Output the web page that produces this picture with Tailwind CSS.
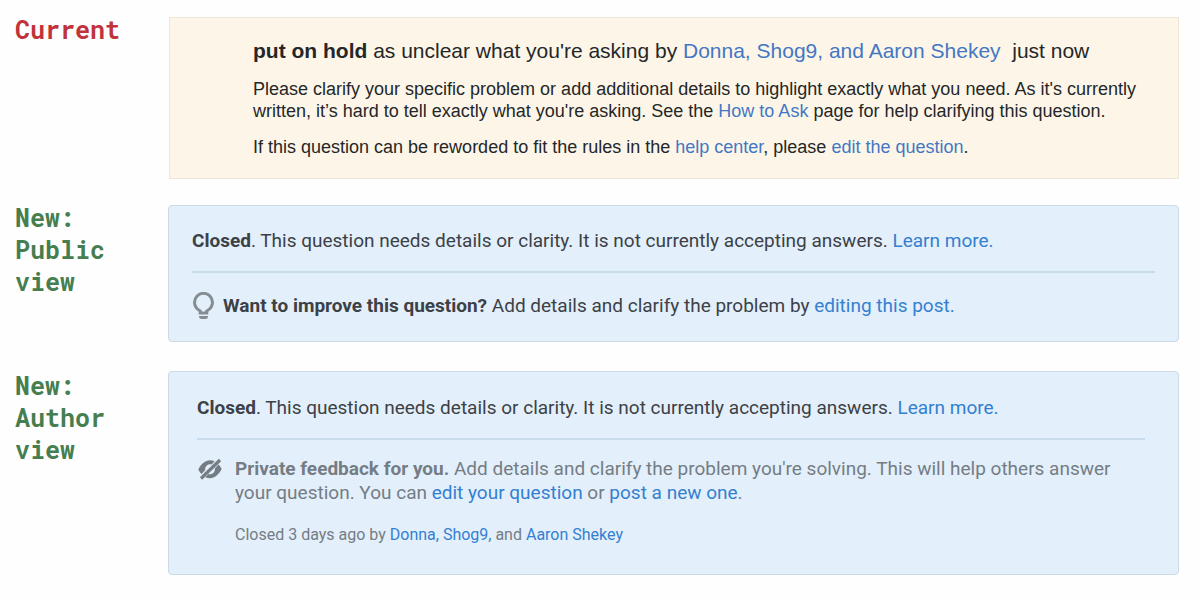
<!DOCTYPE html>
<html lang="en">
<head>
  <meta charset="UTF-8">
  <meta name="viewport" content="width=device-width, initial-scale=1.0">
  <script src="https://cdn.jsdelivr.net/npm/@tailwindcss/browser@4"></script>
  <title>Closed question notices</title>
</head>
<body class="bg-[#fefefe] font-['Roboto','Liberation_Sans',sans-serif]">
  <main class="pt-[17px] pb-6 pl-[15px] pr-[21px]">

    <section id="current" class="flex items-start mb-[26px]">
      <h2 class="w-[153px] shrink-0 -mt-[3px] font-['Roboto_Mono','DejaVu_Sans_Mono',monospace] font-bold text-[25px] leading-8 text-[#c0333b]">Current</h2>
      <div class="grow ml-px pt-5 pb-5 pl-[83px] pr-6 border border-[#eee7d6] bg-[#fdf6e8] text-[#242729] font-['Liberation_Sans',Arial,sans-serif]">
        <p class="text-[21px] leading-[26px]"><b>put on hold</b> as unclear what you're asking by <a href="#" class="text-[#4377c4]">Donna, Shog9, and Aaron Shekey</a>&nbsp; just now</p>
        <p class="mt-[14px] text-[18px] leading-[22px]">Please clarify your specific problem or add additional details to highlight exactly what you need. As it's currently written, it’s hard to tell exactly what you're asking. See the <a href="#" class="text-[#4377c4]">How to Ask</a> page for help clarifying this question.</p>
        <p class="mt-[14px] text-[18px] leading-[22px]">If this question can be reworded to fit the rules in the <a href="#" class="text-[#4377c4]">help center</a>, please <a href="#" class="text-[#4377c4]">edit the question</a>.</p>
      </div>
    </section>

    <section id="public" class="flex items-start mb-[29px]">
      <h2 class="w-[153px] shrink-0 -mt-[3px] font-['Roboto_Mono','DejaVu_Sans_Mono',monospace] font-bold text-[25px] leading-8 text-[#467e50]">New:<br>Public<br>view</h2>
      <div class="grow pt-[23px] pb-[21px] px-[23px] border border-[#cbdae7] rounded bg-[#e3effb] text-[#3c4146] text-[19px] leading-6">
        <p class="pb-[18px] border-b-2 border-[#c8dbea]"><b>Closed</b>. This question needs details or clarity. It is not currently accepting answers. <a href="#" class="text-[#3480d0]">Learn more.</a></p>
        <div class="flex items-center mt-[19px] gap-2">
          <svg class="w-[23px] h-7 shrink-0" viewBox="0 0 23 28" fill="none">
            <path d="M8.200 21v-2C5 17.300 2.500 14 2.500 10.300a9 9 0 0 1 18 0c0 3.700-2.500 7-5.700 8.700v2z" stroke="#858d93" stroke-width="3"/>
            <path d="M7 24h9v.500a2.600 2.600 0 0 1-2.600 2.500H9.600A2.600 2.600 0 0 1 7 24.500z" fill="#858d93"/>
          </svg>
          <p><b>Want to improve this question?</b> Add details and clarify the problem by <a href="#" class="text-[#3480d0]">editing this post.</a></p>
        </div>
      </div>
    </section>

    <section id="author" class="flex items-start">
      <h2 class="w-[153px] shrink-0 -mt-px font-['Roboto_Mono','DejaVu_Sans_Mono',monospace] font-bold text-[25px] leading-8 text-[#467e50]">New:<br>Author<br>view</h2>
      <div class="grow pt-6 pb-[27px] pl-7 pr-[33px] border border-[#cbdae7] rounded bg-[#e3effb] text-[#3c4146] text-[19px] leading-6">
        <p class="pb-[18px] border-b-2 border-[#c8dbea]"><b>Closed</b>. This question needs details or clarity. It is not currently accepting answers. <a href="#" class="text-[#3480d0]">Learn more.</a></p>
        <div class="flex items-start mt-[17px] gap-3 text-[#757d84]">
          <svg class="w-[26px] h-6 shrink-0" viewBox="0 0 26 24" fill="none">
            <path d="M8.200 13 4.600 17C2.300 15 1.400 12.500 1.400 12.500S5.300 3.300 13 3.300c1.700 0 3.400.3 4.700.9L14.600 7.400a5 5 0 0 0-6.400 5.600z" fill="#757d84"/>
            <path d="M17.800 11.500 21.400 7.500c2.300 2 3.200 4.500 3.200 4.500s-3.900 9.200-11.600 9.200c-1.700 0-3.400-.3-4.700-.9l3.100-3.200a5 5 0 0 0 6.400-5.600z" fill="#757d84"/>
            <path d="M4 21.500 23 3" stroke="#757d84" stroke-width="3.200"/>
          </svg>
          <div>
            <p><b>Private feedback for you.</b> Add details and clarify the problem you're solving. This will help others answer your question. You can <a href="#" class="text-[#3480d0]">edit your question</a> or <a href="#" class="text-[#3480d0]">post a new one</a>.</p>
            <p class="mt-[18px] text-[16px] leading-6">Closed 3 days ago by <a href="#" class="text-[#3480d0]">Donna,</a> <a href="#" class="text-[#3480d0]">Shog9,</a> and <a href="#" class="text-[#3480d0]">Aaron Shekey</a></p>
          </div>
        </div>
      </div>
    </section>

  </main>
</body>
</html>
